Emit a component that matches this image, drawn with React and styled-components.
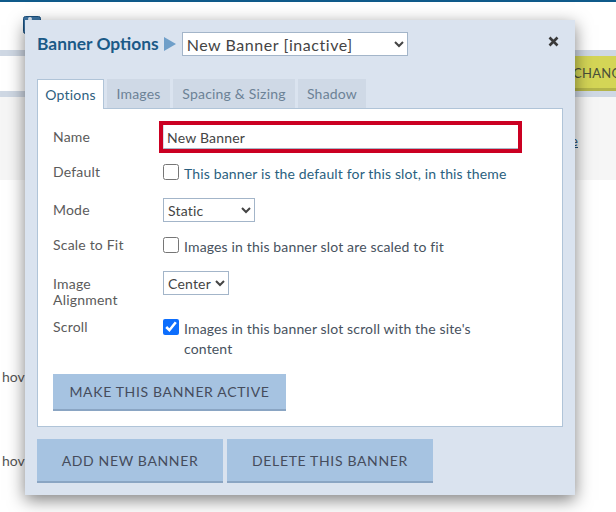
import styled, { createGlobalStyle } from "styled-components";

const GlobalStyle = createGlobalStyle`
    html, body {
        margin: 0;
        padding: 0;
        background: #fff;
    }
    body {
        font-family: "Lato", "Noto Sans", sans-serif;
        font-size: 14px;
        color: #444;
    }
`
const Page = styled.div`
    position: relative;
    width: 616px;
    height: 512px;
    overflow: hidden;
`
const TopBar = styled.div`
    height: 2px;
    background: #0f5a8a;
`
const Header = styled.div`
    height: 48px;
    box-sizing: border-box;
    padding: 14px 0 0 23px;
`
const Toolbar = styled.div`
    height: 47px;
    box-sizing: border-box;
    background: #fff;
    border-top: 6px solid #cfd8e4;
    border-bottom: 6px solid #cfd8e4;
    display: flex;
    justify-content: flex-end;
`
const YellowButton = styled.div`
    width: 110px;
    margin-right: -60px;
    padding-left: 7px;
    flex-shrink: 0;
    height: 35px;
    box-sizing: border-box;
    background: #d4d556;
    border-bottom: 3px solid #b4b54a;
    color: #4a4f3a;
    font-size: 13px;
    letter-spacing: 0.3px;
    line-height: 34px;
    white-space: nowrap;
    overflow: hidden;
`
const GreySection = styled.div`
    height: 83px;
    background: #f6f6f6;
    display: flex;
    justify-content: flex-end;
    padding: 35px 38px 0 0;
    box-sizing: border-box;
`
const PageLink = styled.span`
    color: #1c4f78;
    text-decoration: underline;
    line-height: 18px;
    height: 18px;
`
const HoverLine = styled.div`
    margin: ${(p) => p.$top}px 0 0 2px;
    line-height: 18px;
    color: #555;
`
const Dialog = styled.div`
    position: absolute;
    left: 25px;
    top: 20px;
    width: 550px;
    height: 475px;
    box-sizing: border-box;
    padding: 0 12px;
    background: #dae3ef;
    box-shadow: 0 5px 16px rgba(0, 0, 0, 0.5);
`
const TitleRow = styled.div`
    display: flex;
    align-items: center;
    height: 24px;
    margin-top: 12px;
`
const Title = styled.h2`
    margin: -2px 5px 0 0;
    font-size: 17.4px;
    font-weight: 700;
    color: #1b5a87;
`
const BannerSelect = styled.select`
    width: 226px;
    height: 24px;
    margin-left: 6px;
    padding: 0;
    border: 1px solid #a3b5c9;
    border-radius: 0;
    background: #fff;
    font: 16px "Lato", sans-serif;
    letter-spacing: 0.55px;
    color: #444;
`
const CloseButton = styled.button`
    margin-left: auto;
    margin-right: 4px;
    margin-top: -5px;
    padding: 0;
    border: 0;
    background: none;
    display: flex;
`
const Tabs = styled.div`
    display: flex;
    gap: 3px;
    margin-top: 23px;
    position: relative;
    z-index: 1;
`
const Tab = styled.div`
    box-sizing: border-box;
    width: ${(p) => p.$width}px;
    height: ${(p) => (p.$active ? 30 : 29)}px;
    margin-bottom: ${(p) => (p.$active ? -1 : 0)}px;
    text-align: center;
    line-height: 29px;
    letter-spacing: 0.2px;
    color: ${(p) => (p.$active ? "#2f5f80" : "#6c8296")};
    background: ${(p) => (p.$active ? "#fff" : "#cfd9e6")};
    border: ${(p) => (p.$active ? "1px solid #b0c4d8" : "0")};
    border-bottom: 0;
`
const Panel = styled.div`
    height: 319px;
    box-sizing: border-box;
    padding: 12px 15px 0;
    background: #fff;
    border: 1px solid #b0c4d8;
`
const Row = styled.div`
    display: flex;
    align-items: ${(p) => (p.$center ? "center" : "flex-start")};
    margin-top: ${(p) => p.$gap || 0}px;
`
const Label = styled.div`
    width: 110px;
    box-sizing: border-box;
    padding-right: 30px;
    flex-shrink: 0;
    line-height: 16px;
    letter-spacing: 0.2px;
    color: #5b5b5b;
    padding-top: ${(p) => p.$pad || 0}px;
`
const NameInput = styled.input`
    width: 363px;
    height: 32px;
    margin-left: -4px;
    box-sizing: border-box;
    padding: 0 4px;
    border: 4px solid #cb0022;
    box-shadow: inset 0 -1px 0 #a9b8c8, inset 1px 0 0 #d5dde6;
    outline: 0;
    font: 14px "Lato", sans-serif;
    letter-spacing: 0.2px;
    color: #444;
`
const Check = styled.input`
    width: 16px;
    height: 16px;
    margin: 0 5px 0 0;
    flex-shrink: 0;
    accent-color: #0d6efd;
`
const CheckText = styled.label`
    line-height: 20px;
    letter-spacing: 0.15px;
    color: ${(p) => (p.$blue ? "#2a5f80" : "#47525e")};
    width: 335px;
`
const SmallSelect = styled.select`
    width: ${(p) => p.$width}px;
    height: 24px;
    padding: 0;
    border: 1px solid #a3b5c9;
    border-radius: 0;
    background: #fff;
    font: 14px "Lato", sans-serif;
    letter-spacing: 0.2px;
    color: #444;
`
const ActionButton = styled.button`
    width: ${(p) => p.$width}px;
    height: ${(p) => p.$height}px;
    box-sizing: border-box;
    padding: 0;
    border: 0;
    border-bottom: 2px solid #8aa5c3;
    background: #a6c3e1;
    font: 14px "Lato", sans-serif;
    letter-spacing: 0.65px;
    color: #454c5c;
    text-transform: uppercase;
`
const ActiveWrap = styled.div`
    margin-top: 15px;
`
const Footer = styled.div`
    display: flex;
    gap: 4px;
    margin-top: 12px;
`

export default function App() {
    return (
        <Page>
            <GlobalStyle />
            <TopBar />
            <Header>
                <svg width="18" height="18" viewBox="0 0 18 18">
                    <rect x="0.5" y="0.5" width="17" height="17" rx="2" fill="#3d74a3" stroke="#1b4f7c" />
                    <circle cx="7" cy="3" r="2" fill="#dfe8f2" />
                </svg>
            </Header>
            <Toolbar>
                <YellowButton>CHANGES</YellowButton>
            </Toolbar>
            <GreySection>
                <PageLink>e</PageLink>
            </GreySection>
            <HoverLine $top={188}>hov</HoverLine>
            <HoverLine $top={66}>hov</HoverLine>

            <Dialog>
                <TitleRow>
                    <Title>Banner Options</Title>
                    <svg width="12" height="14" viewBox="0 0 12 14">
                        <path d="M0 0 L12 7 L0 14 Z" fill="#6f9fc9" />
                    </svg>
                    <BannerSelect defaultValue="new">
                        <option value="new">New Banner [inactive]</option>
                    </BannerSelect>
                    <CloseButton aria-label="Close">
                        <svg width="11" height="11" viewBox="0 0 11 11">
                            <path d="M1.5 1.5 L9.5 9.5 M9.5 1.5 L1.5 9.5" stroke="#3a3a3a" strokeWidth="2.6" />
                        </svg>
                    </CloseButton>
                </TitleRow>

                <Tabs>
                    <Tab $width={67} $active>Options</Tab>
                    <Tab $width={63}>Images</Tab>
                    <Tab $width={122}>Spacing &amp; Sizing</Tab>
                    <Tab $width={68}>Shadow</Tab>
                </Tabs>

                <Panel>
                    <Row $center>
                        <Label>Name</Label>
                        <NameInput defaultValue="New Banner" />
                    </Row>
                    <Row $gap={11}>
                        <Label>Default</Label>
                        <Check type="checkbox" />
                        <CheckText $blue>This banner is the default for this slot, in this theme</CheckText>
                    </Row>
                    <Row $gap={14} $center>
                        <Label>Mode</Label>
                        <SmallSelect $width={92} defaultValue="static">
                            <option value="static">Static</option>
                        </SmallSelect>
                    </Row>
                    <Row $gap={15}>
                        <Label>Scale to Fit</Label>
                        <Check type="checkbox" />
                        <CheckText>Images in this banner slot are scaled to fit</CheckText>
                    </Row>
                    <Row $gap={14}>
                        <Label $pad={5}>Image Alignment</Label>
                        <SmallSelect $width={66} defaultValue="center">
                            <option value="center">Center</option>
                        </SmallSelect>
                    </Row>
                    <Row $gap={11}>
                        <Label>Scroll</Label>
                        <Check type="checkbox" defaultChecked />
                        <CheckText>Images in this banner slot scroll with the site's content</CheckText>
                    </Row>
                    <ActiveWrap>
                        <ActionButton $width={233} $height={37}>Make this banner active</ActionButton>
                    </ActiveWrap>
                </Panel>

                <Footer>
                    <ActionButton $width={186} $height={44}>Add new banner</ActionButton>
                    <ActionButton $width={206} $height={44}>Delete this banner</ActionButton>
                </Footer>
            </Dialog>
        </Page>
    )
}
